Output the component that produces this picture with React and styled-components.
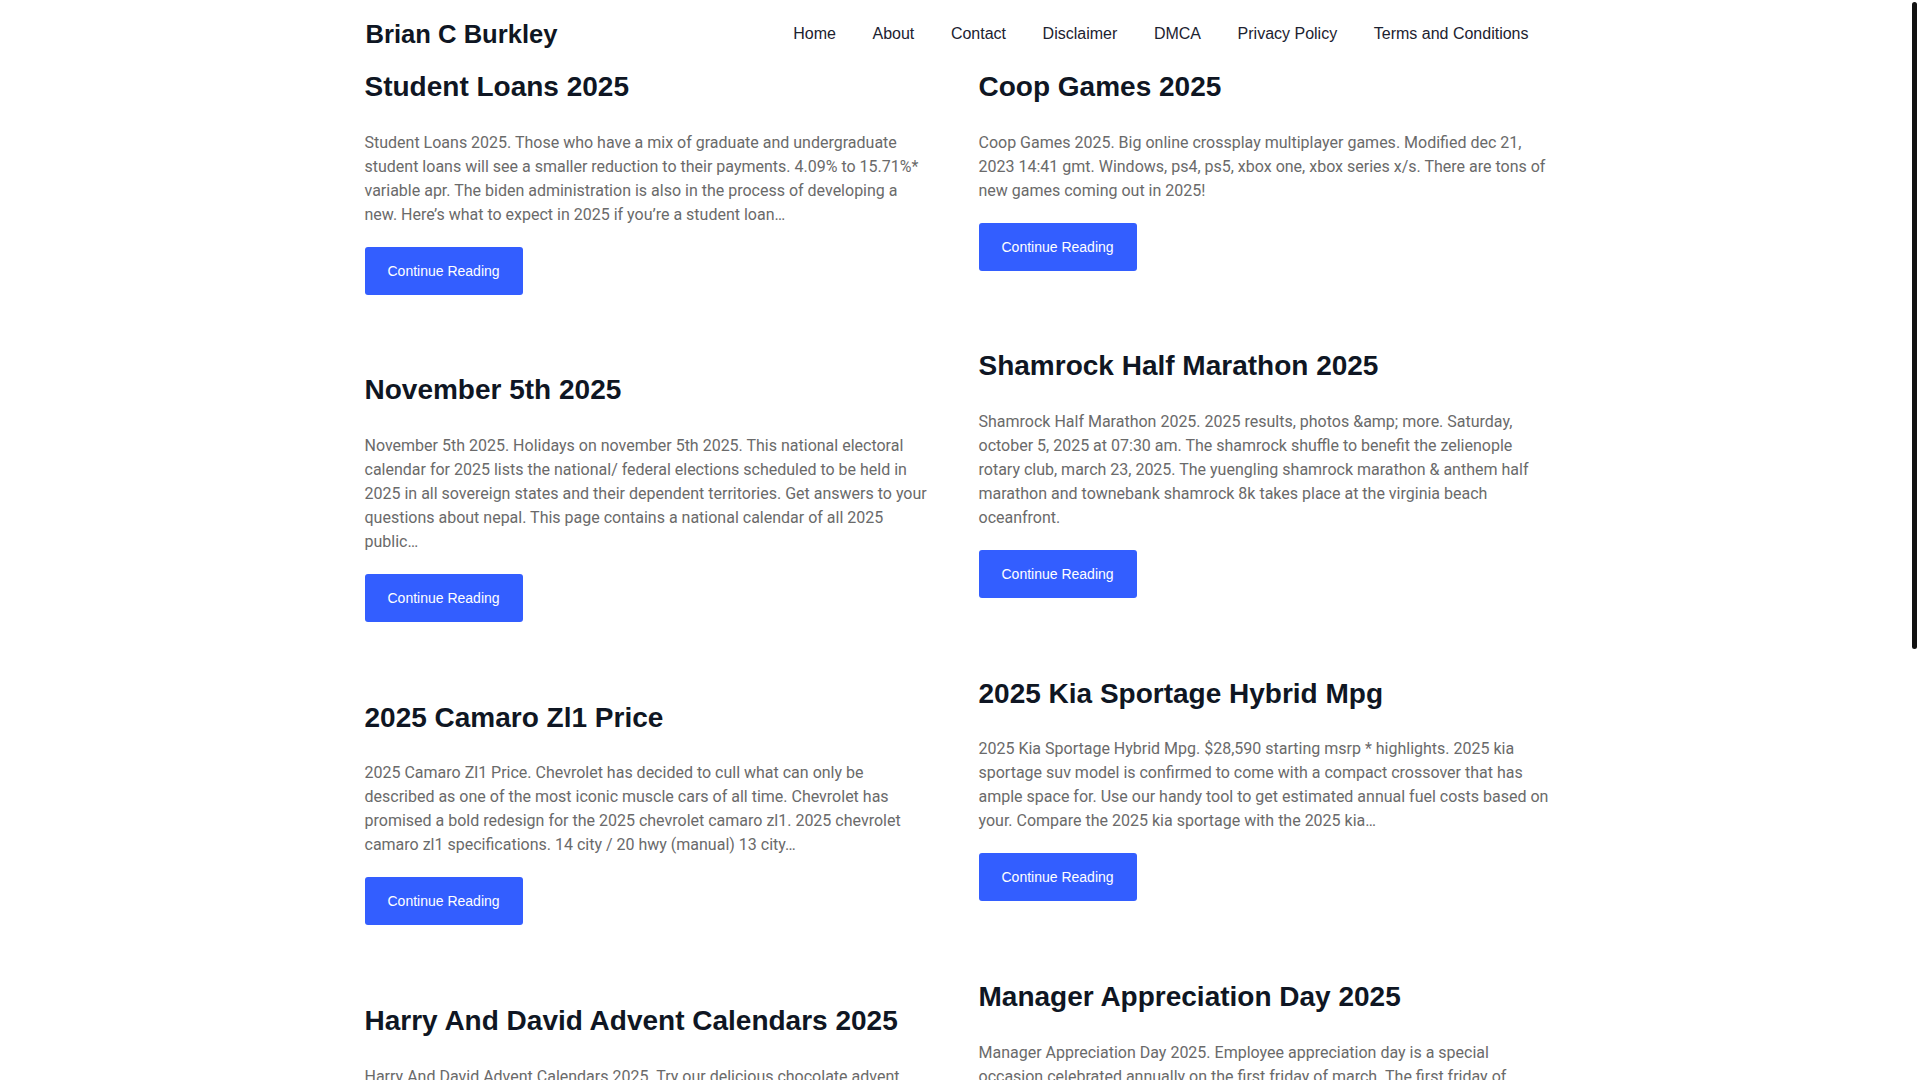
import React from 'react'
import styled, { createGlobalStyle } from 'styled-components'

const GlobalStyle = createGlobalStyle`
	html, body {
		margin: 0;
		padding: 0;
		background: #fff;
	}
	body {
		font-family: Roboto, 'Liberation Sans', Arial, sans-serif;
	}
	* {
		box-sizing: border-box;
	}
`

// leaves room for the scrollbar gutter seen in the reference
const Page = styled.div`
	padding-right: 5px;
`

const ScrollThumb = styled.div`
	position: fixed;
	top: 2px;
	right: 3px;
	width: 5px;
	height: 647px;
	border-radius: 3px;
	background: #121212;
`

const Container = styled.div`
	width: 1186px;
	margin: 0 auto;
`

const Header = styled.header`
	height: 68px;
	display: flex;
	align-items: center;
	justify-content: space-between;
`

const Brand = styled.a`
	font-family: 'Liberation Sans', Arial, sans-serif;
	font-weight: 700;
	font-size: 25.6px;
	line-height: 1.2;
	color: #0f1623;
	text-decoration: none;
	margin-left: 1px;
`

const Nav = styled.nav`
	display: flex;
	gap: 36.6px;
	padding-right: 22px;
`

const NavLink = styled.a`
	font-family: 'Liberation Sans', Arial, sans-serif;
	font-size: 16px;
	color: #1c2230;
	text-decoration: none;
`

const Grid = styled.main`
	display: grid;
	grid-template-columns: 564px 572px;
	column-gap: 50px;
	align-items: start;
	padding-top: 2px;
`

const Column = styled.div`
	display: flex;
	flex-direction: column;
	gap: 78.8px;
`

const Article = styled.article`
	display: flex;
	flex-direction: column;
	align-items: flex-start;
`

const Title = styled.h2`
	font-family: 'Liberation Sans', Arial, sans-serif;
	font-weight: 700;
	font-size: 28px;
	line-height: 1.2;
	color: #0f1623;
	margin: 0 0 27px;
`

const Excerpt = styled.p`
	font-family: Roboto, sans-serif;
	font-size: 16px;
	line-height: 24px;
	color: #6a6a6a;
	margin: 0 0 20px;
`

const Button = styled.a`
	display: inline-block;
	background: #335eff;
	color: #fff;
	font-family: 'Liberation Sans', Arial, sans-serif;
	font-size: 14px;
	line-height: 16px;
	padding: 16px 23px;
	border-radius: 3px;
	text-decoration: none;
`

const links = ['Home', 'About', 'Contact', 'Disclaimer', 'DMCA', 'Privacy Policy', 'Terms and Conditions']

const left = [
	{
		title: 'Student Loans 2025',
		text: 'Student Loans 2025. Those who have a mix of graduate and undergraduate student loans will see a smaller reduction to their payments. 4.09% to 15.71%* variable apr. The biden administration is also in the process of developing a new. Here’s what to expect in 2025 if you’re a student loan…'
	},
	{
		title: 'November 5th 2025',
		text: 'November 5th 2025. Holidays on november 5th 2025. This national electoral calendar for 2025 lists the national/ federal elections scheduled to be held in 2025 in all sovereign states and their dependent territories. Get answers to your questions about nepal. This page contains a national calendar of all 2025 public…'
	},
	{
		title: '2025 Camaro Zl1 Price',
		text: '2025 Camaro Zl1 Price. Chevrolet has decided to cull what can only be described as one of the most iconic muscle cars of all time. Chevrolet has promised a bold redesign for the 2025 chevrolet camaro zl1. 2025 chevrolet camaro zl1 specifications. 14 city / 20 hwy (manual) 13 city…'
	},
	{
		title: 'Harry And David Advent Calendars 2025',
		text: 'Harry And David Advent Calendars 2025. Try our delicious chocolate advent calendars and count down the days to the holidays with a sweet surprise every morning. Shop gourmet gifts…'
	}
]

const right = [
	{
		title: 'Coop Games 2025',
		text: 'Coop Games 2025. Big online crossplay multiplayer games. Modified dec 21, 2023 14:41 gmt. Windows, ps4, ps5, xbox one, xbox series x/s. There are tons of new games coming out in 2025!'
	},
	{
		title: 'Shamrock Half Marathon 2025',
		text: 'Shamrock Half Marathon 2025. 2025 results, photos &amp; more. Saturday, october 5, 2025 at 07:30 am. The shamrock shuffle to benefit the zelienople rotary club, march 23, 2025. The yuengling shamrock marathon & anthem half marathon and townebank shamrock 8k takes place at the virginia beach oceanfront.'
	},
	{
		title: '2025 Kia Sportage Hybrid Mpg',
		text: '2025 Kia Sportage Hybrid Mpg. $28,590 starting msrp * highlights. 2025 kia sportage suv model is confirmed to come with a compact crossover that has ample space for. Use our handy tool to get estimated annual fuel costs based on your. Compare the 2025 kia sportage with the 2025 kia…'
	},
	{
		title: 'Manager Appreciation Day 2025',
		text: 'Manager Appreciation Day 2025. Employee appreciation day is a special occasion celebrated annually on the first friday of march. The first friday of march is a great time to thank the people who lead your team…'
	}
]

const Post = ({ title, text }) => (
	<Article>
		<Title>{title}</Title>
		<Excerpt>{text}</Excerpt>
		<Button href="#">Continue Reading</Button>
	</Article>
)

const App = () => (
	<Page>
		<GlobalStyle />
		<Container>
			<Header>
				<Brand href="#">Brian C Burkley</Brand>
				<Nav>
					{links.map(l => (
						<NavLink href="#" key={l}>
							{l}
						</NavLink>
					))}
				</Nav>
			</Header>
			<Grid>
				<Column>
					{left.map(p => (
						<Post key={p.title} {...p} />
					))}
				</Column>
				<Column>
					{right.map(p => (
						<Post key={p.title} {...p} />
					))}
				</Column>
			</Grid>
		</Container>
		<ScrollThumb />
	</Page>
)

export default App
